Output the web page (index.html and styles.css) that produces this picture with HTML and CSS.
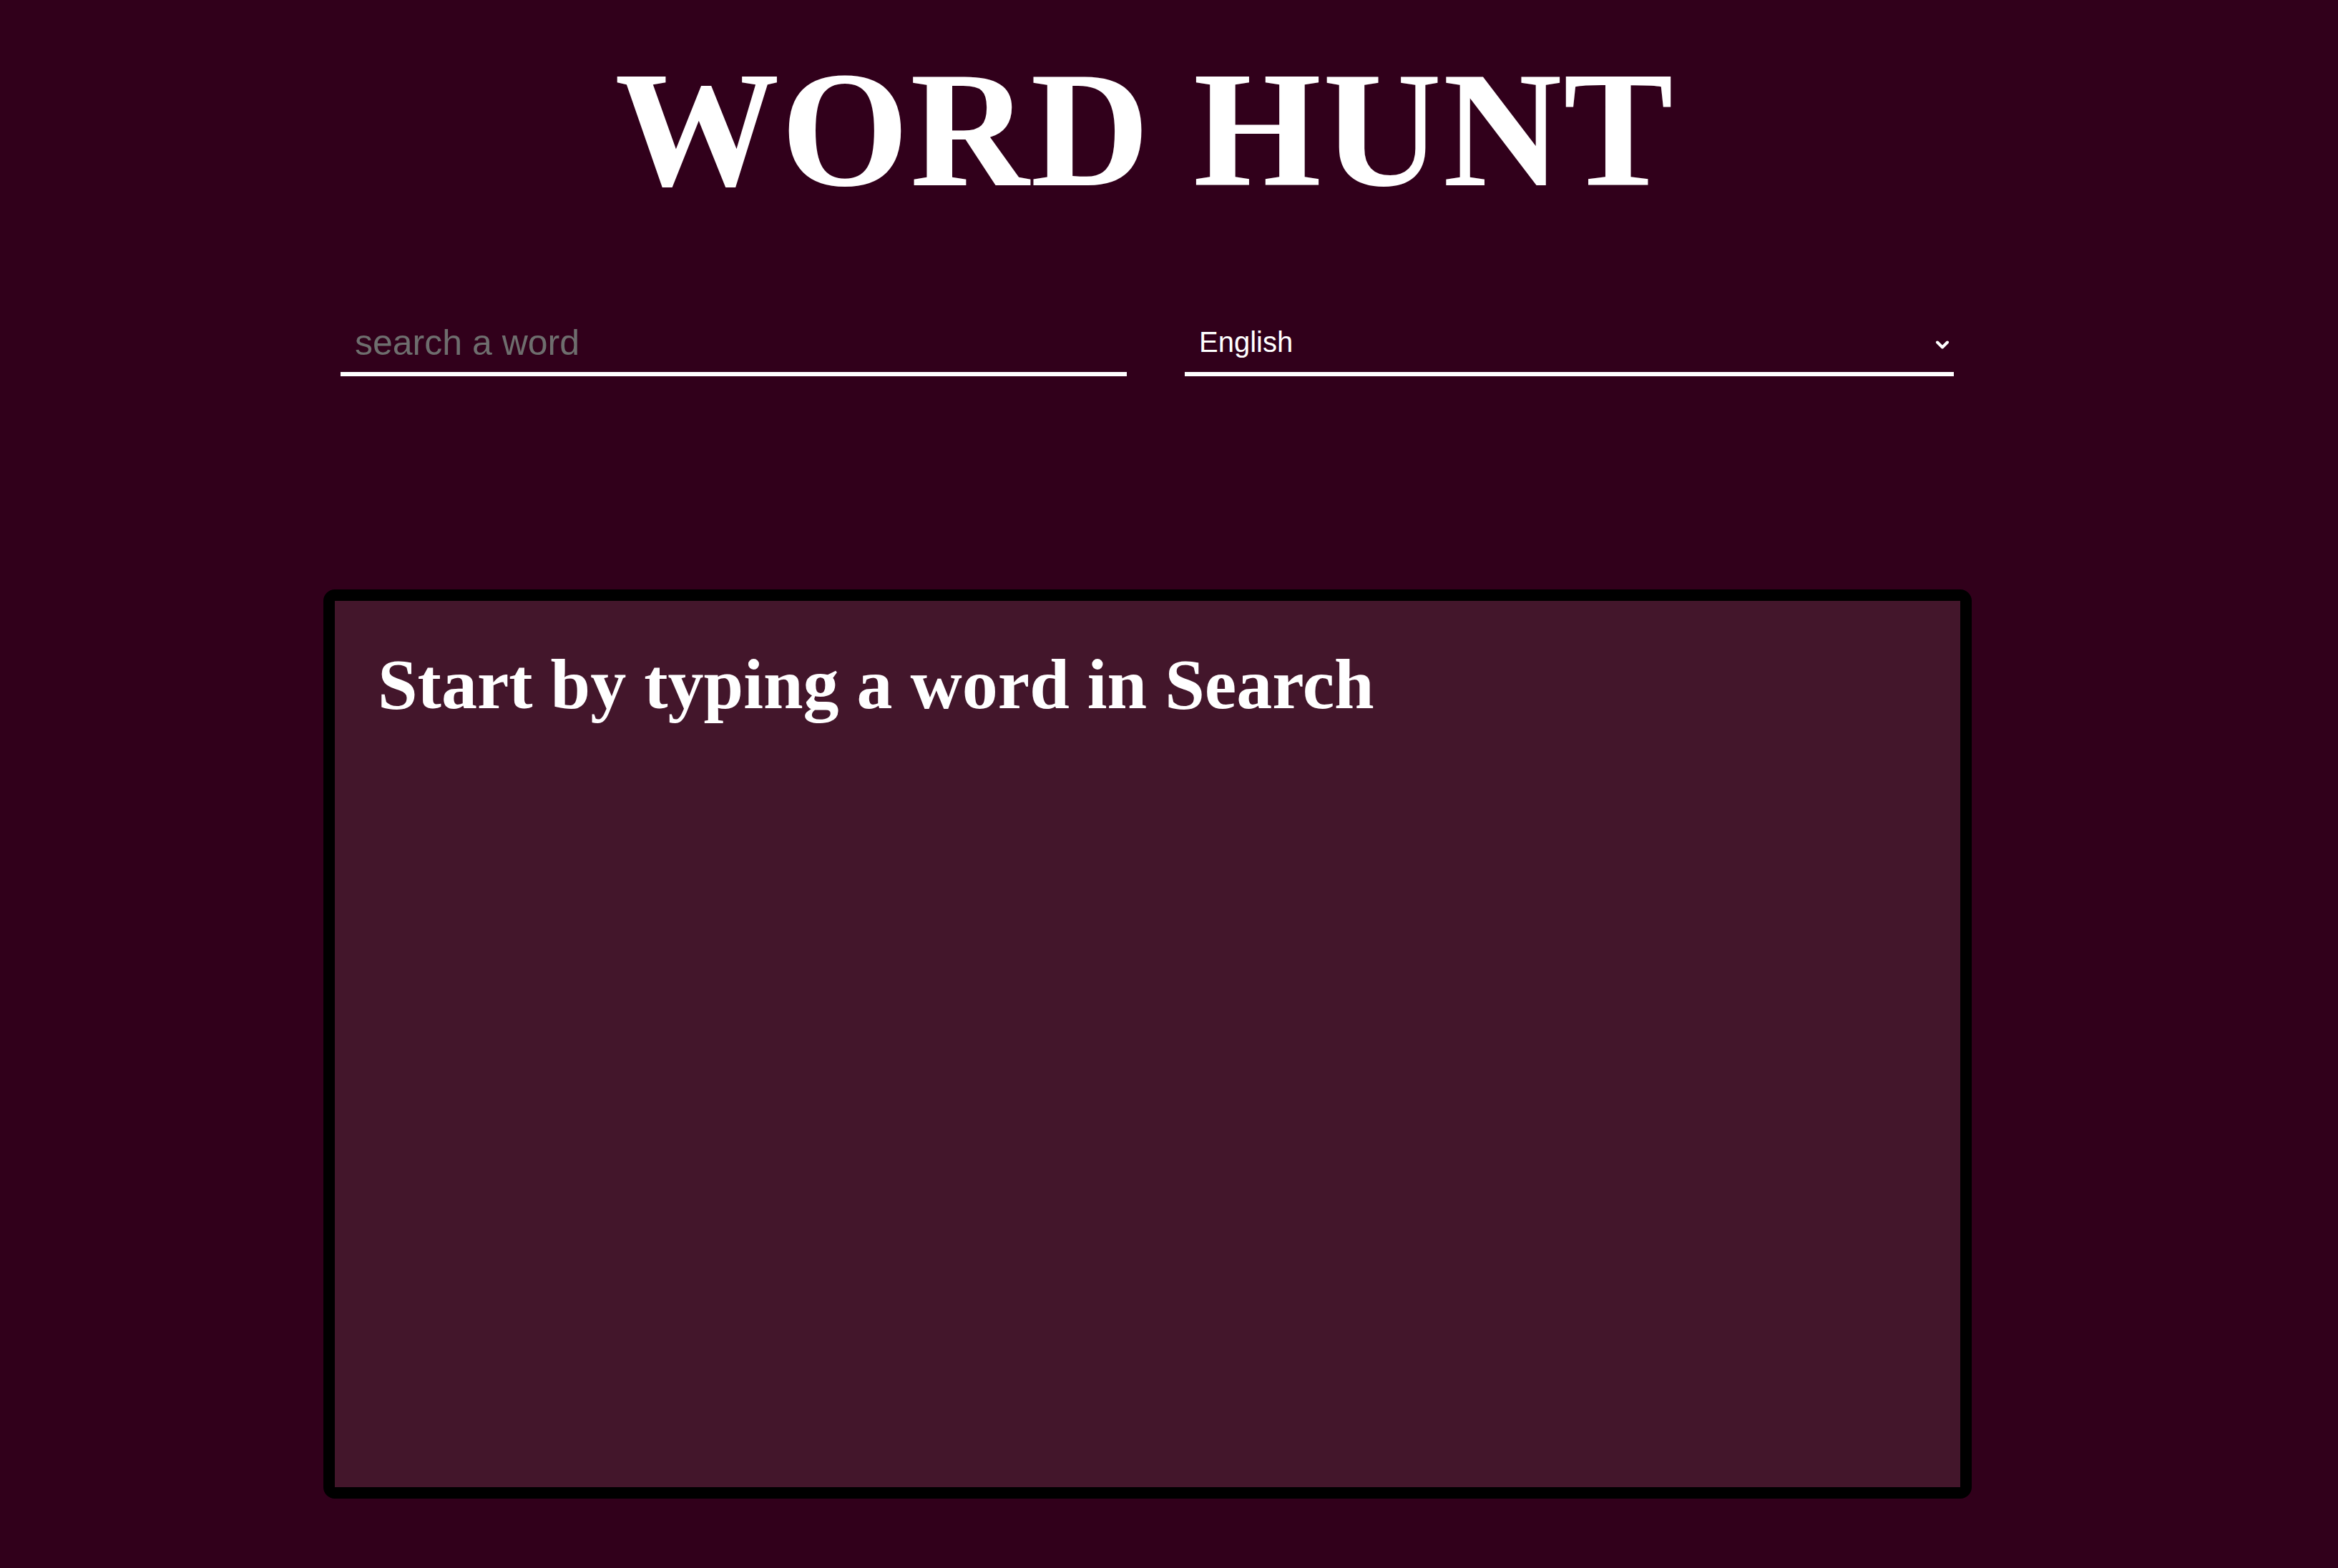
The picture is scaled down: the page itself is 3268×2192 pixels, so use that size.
FILE: index.html
```html
<!DOCTYPE html>
<html lang="en">
<head>
<meta charset="utf-8">
<title>Word Hunt</title>
<link rel="stylesheet" href="styles.css">
</head>
<body>
<div class="app">
  <h1 class="title">WORD HUNT</h1>
  <div class="controls">
    <input class="search" type="text" placeholder="search a word">
    <div class="select-wrap">
      <select class="lang">
        <option>English</option>
        <option>Hindi</option>
        <option>French</option>
      </select>
      <svg class="chevron" width="20" height="12" viewBox="0 0 20 12"><polyline points="3,2.5 10,9.5 17,2.5" fill="none" stroke="#ffffff" stroke-width="4" stroke-linecap="round" stroke-linejoin="round"/></svg>
    </div>
  </div>
  <div class="results">
    <h2 class="hint">Start by typing a word in Search</h2>
  </div>
</div>
</body>
</html>
```

FILE: styles.css
```css
html, body {
  margin: 0;
  padding: 0;
  background: #31001b;
}

.app {
  width: 2304px;
  margin-left: 452px;
  display: flex;
  flex-direction: column;
}

.title {
  margin: 0;
  padding-top: 67px;
  padding-right: 8px;
  font-family: "Liberation Serif", "Times New Roman", serif;
  font-weight: bold;
  font-size: 230px;
  letter-spacing: 2px;
  line-height: 1;
  color: #ffffff;
  text-align: center;
  height: 230px;
}

.controls {
  display: flex;
  gap: 81px;
  padding: 0 24px 0 24px;
  margin-top: 149px;
}

.search {
  width: 1099px;
  height: 80px;
  box-sizing: border-box;
  background: transparent;
  border: none;
  border-bottom: 6px solid #ffffff;
  outline: none;
  padding: 0 20px 8px 20px;
  font-family: "Liberation Sans", Arial, sans-serif;
  font-size: 50px;
  color: #ffffff;
}

.search::placeholder {
  color: #6e6e6e;
}

.select-wrap {
  position: relative;
  width: 1075px;
}

.lang {
  width: 100%;
  height: 80px;
  box-sizing: border-box;
  -webkit-appearance: none;
  appearance: none;
  background: transparent;
  border: none;
  border-bottom: 6px solid #ffffff;
  border-radius: 0;
  outline: none;
  padding: 0 20px 10px 20px;
  font-family: "Liberation Sans", Arial, sans-serif;
  font-size: 40px;
  color: #ffffff;
}

.lang option {
  background: #31001b;
}

.chevron {
  position: absolute;
  right: 6px;
  top: 30px;
  pointer-events: none;
}

.results {
  margin-top: 298px;
  height: 1271px;
  box-sizing: border-box;
  border: 16px solid #000000;
  border-radius: 16px;
  background: #43162b;
  padding: 59px 60px 56px 60px;
}

.hint {
  margin: 0;
  font-family: "Liberation Serif", "Times New Roman", serif;
  font-weight: bold;
  font-size: 100px;
  line-height: 1.15;
  color: #ffffff;
}
```
